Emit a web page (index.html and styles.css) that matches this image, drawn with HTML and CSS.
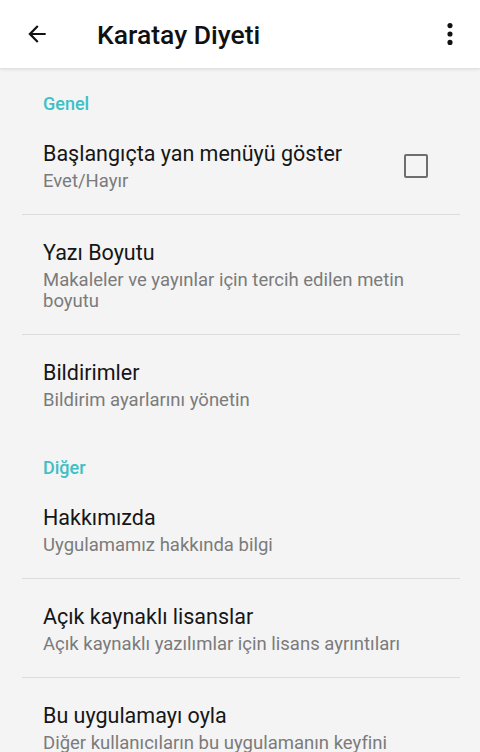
FILE: index.html
```html
<!DOCTYPE html>
<html lang="tr">
<head>
<meta charset="utf-8">
<link rel="stylesheet" href="styles.css">
</head>
<body>
<header class="appbar">
  <svg class="icon back" viewBox="0 0 24 24" width="26" height="26"><path d="M20 11H7.83l5.59-5.59L12 4l-8 8 8 8 1.41-1.41L7.83 13H20v-2z"/></svg>
  <h1 class="title">Karatay Diyeti</h1>
  <svg class="icon more" viewBox="0 0 24 24" width="28" height="28"><circle cx="12" cy="4.8" r="2.2"/><circle cx="12" cy="12" r="2.2"/><circle cx="12" cy="19.2" r="2.2"/></svg>
</header>
<main class="prefs">
  <div class="cat">Genel</div>
  <div class="item">
    <div class="text">
      <div class="t">Başlangıçta yan menüyü göster</div>
      <div class="s">Evet/Hayır</div>
    </div>
    <span class="check"></span>
  </div>
  <div class="item">
    <div class="text">
      <div class="t">Yazı Boyutu</div>
      <div class="s">Makaleler ve yayınlar için tercih edilen metin boyutu</div>
    </div>
  </div>
  <div class="item last">
    <div class="text">
      <div class="t">Bildirimler</div>
      <div class="s">Bildirim ayarlarını yönetin</div>
    </div>
  </div>
  <div class="cat">Diğer</div>
  <div class="item">
    <div class="text">
      <div class="t">Hakkımızda</div>
      <div class="s">Uygulamamız hakkında bilgi</div>
    </div>
  </div>
  <div class="item">
    <div class="text">
      <div class="t">Açık kaynaklı lisanslar</div>
      <div class="s">Açık kaynaklı yazılımlar için lisans ayrıntıları</div>
    </div>
  </div>
  <div class="item">
    <div class="text">
      <div class="t">Bu uygulamayı oyla</div>
      <div class="s">Diğer kullanıcıların bu uygulamanın keyfini çıkarmasına yardım edin</div>
    </div>
  </div>
</main>
</body>
</html>
```
FILE: styles.css
```css
html, body {
  margin: 0;
  padding: 0;
  height: 100%;
  overflow: hidden;
}
body {
  background: #f4f4f4;
  font-family: Roboto, "Noto Sans", sans-serif;
  color: #1a1a1a;
}
.appbar {
  height: 68px;
  background: #ffffff;
  display: flex;
  align-items: center;
  border-bottom: 1px solid #e2e2e2;
  box-shadow: 0 1px 3px rgba(0,0,0,0.08);
  position: relative;
}
.icon { fill: #111; flex: none; }
.back { margin-left: 24px; }
.title {
  margin: 0 0 0 47px;
  font-size: 26.5px;
  font-weight: 500;
  color: #111;
  flex: 1;
}
.more { margin-right: 16px; }
.prefs {
  padding: 0 20px 0 22px;
}
.cat {
  color: #3fbfc4;
  font-size: 18px;
  font-weight: 500;
  padding: 23px 0 0 21px;
  line-height: 24px;
}
.item {
  display: flex;
  align-items: flex-start;
  border-bottom: 1px solid #dcdcdc;
  padding: 24px 0 22px 21px;
}
.item.last { border-bottom: none; }
.text { flex: 1; }
.t {
  font-size: 21.5px;
  line-height: 28px;
  color: #161616;
}
.s {
  font-size: 18.5px;
  line-height: 21px;
  color: #7b7b7b;
  margin-top: 3px;
  padding-right: 30px;
}
.check {
  width: 20px;
  height: 20px;
  border: 2px solid #6e6e6e;
  border-radius: 2px;
  margin: 14px 32px 0 20px;
}
```
